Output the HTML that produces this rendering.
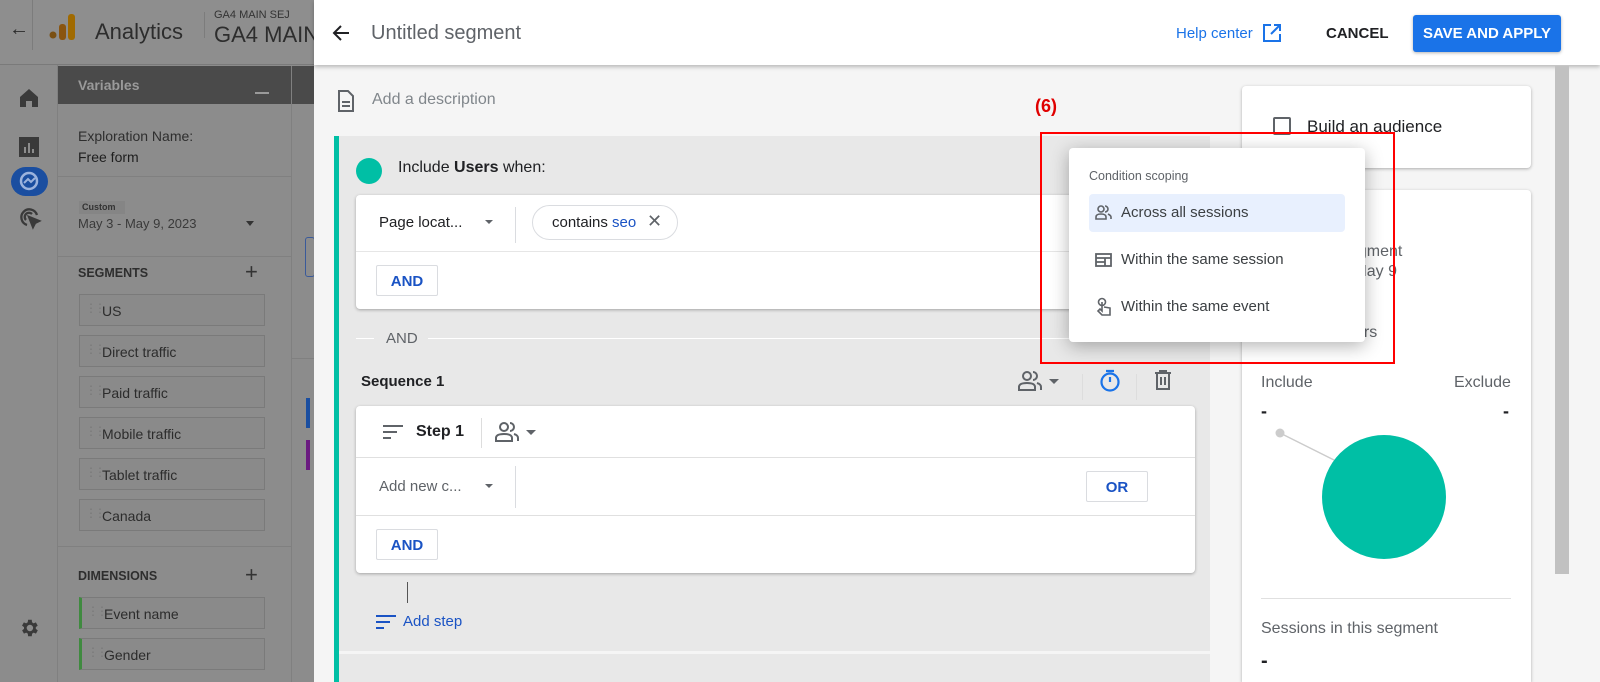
<!DOCTYPE html>
<html><head><meta charset="utf-8"><style>
*{box-sizing:border-box;margin:0;padding:0}
html,body{width:1600px;height:682px;overflow:hidden}
body{font-family:"Liberation Sans",Roboto,sans-serif;background:#8c8c8c;position:relative;color:#202124}
.a{position:absolute}
.dim{color:#2a2a2a}
.chip{position:absolute;left:79px;width:186px;height:32px;border:1px solid #7a7a7a;background:#8a8a8a;font-size:14px;color:#2c2c2c;padding:8px 0 0 22px}
.chip:before{content:"⋮⋮";position:absolute;left:5px;top:6px;font-size:12px;letter-spacing:-3px;color:#777}
.sec{font-size:12.5px;font-weight:bold;color:#2e2e2e}
.card{background:#fff;border-radius:4px;box-shadow:0 1px 3px rgba(0,0,0,.3)}
.btn{position:absolute;border:1px solid #dadce0;background:#fff;color:#1a53c4;font-size:15px;font-weight:bold;text-align:center;border-radius:2px}
.mi{position:absolute;left:20px;width:256px;height:38px;border-radius:4px;font-size:15px;color:#3c4043;padding:10px 0 0 32px}
</style></head><body>
<!-- dimmed app -->
<div class="a" style="left:0;top:0;width:1600px;height:65px;background:#8e8e8e;border-bottom:1px solid #7a7a7a"></div>
<div class="a" style="left:32px;top:0;width:1px;height:50px;background:#7c7c7c"></div>
<div class="a dim" style="left:9px;top:18px;font-size:20px">←</div>
<svg class="a" style="left:48px;top:14px" width="28" height="26"><circle cx="5" cy="21" r="3.5" fill="#7a4f12"/><rect x="11" y="10" width="7" height="16" rx="3" fill="#8a5510"/><rect x="20" y="0" width="7" height="26" rx="3" fill="#a06a00"/></svg>
<div class="a" style="left:95px;top:19px;font-size:22px;color:#2d2d2d">Analytics</div>
<div class="a" style="left:204px;top:12px;width:1px;height:26px;background:#7c7c7c"></div>
<div class="a" style="left:214px;top:9px;font-size:11px;color:#333">GA4 MAIN SEJ</div>
<div class="a" style="left:214px;top:22px;font-size:22px;color:#2d2d2d">GA4 MAIN</div>
<svg class="a" style="left:18px;top:88px" width="22" height="20" fill="#3a3a3a"><path d="M2 9 11 1 20 9V19H14V13H8V19H2Z"/></svg>
<svg class="a" style="left:19px;top:137px" width="20" height="20" fill="#3a3a3a"><path d="M0 0H20V20H0ZM5 10V16H7V10ZM9 6V16H11V6ZM13 12V16H15V12Z"/></svg>
<div class="a" style="left:11px;top:167px;width:37px;height:29px;border-radius:15px;background:#1a4ea0"></div>
<svg class="a" style="left:19px;top:171px" width="21" height="21"><circle cx="10" cy="10" r="8" fill="none" stroke="#9bb3dd" stroke-width="2.5"/><path d="M5 12 9 8 12 11 16 7" stroke="#9bb3dd" stroke-width="2" fill="none"/></svg>
<svg class="a" style="left:18px;top:206px" width="24" height="24" fill="none" stroke="#3a3a3a" stroke-width="2.3"><path d="M19 9A8 8 0 1 0 9 19"/><path d="M14 8A4 4 0 1 0 8 14"/><path d="M11 11 21 15 17 17 15 21Z" fill="#3a3a3a"/></svg>
<svg class="a" style="left:18px;top:617px" width="22" height="22" viewBox="0 0 24 24" fill="#3a3a3a"><path d="M19.4 13a7.5 7.5 0 0 0 0-2l2.1-1.6-2-3.5-2.5 1a7 7 0 0 0-1.7-1L15 3h-4l-.4 2.9a7 7 0 0 0-1.7 1l-2.5-1-2 3.5L6.6 11a7.5 7.5 0 0 0 0 2l-2.1 1.6 2 3.5 2.5-1a7 7 0 0 0 1.7 1L11 21h4l.4-2.9a7 7 0 0 0 1.7-1l2.5 1 2-3.5ZM13 15.5A3.5 3.5 0 1 1 13 8.5a3.5 3.5 0 0 1 0 7Z"/></svg>
<div class="a" style="left:57px;top:65px;width:1px;height:617px;background:#808080"></div>
<div class="a" style="left:58px;top:66px;width:233px;height:38px;background:#4a4a4a"></div>
<div class="a" style="left:78px;top:77px;font-size:14px;font-weight:bold;color:#9a9a9a">Variables</div>
<div class="a" style="left:255px;top:92px;width:14px;height:2px;background:#9a9a9a"></div>
<div class="a" style="left:291px;top:66px;width:1px;height:616px;background:#808080"></div>
<div class="a" style="left:292px;top:66px;width:30px;height:38px;background:#4a4a4a"></div>
<div class="a" style="left:78px;top:126px;font-size:14px;color:#2e2e2e;line-height:21px">Exploration Name:<br><span style="color:#1e1e1e">Free form</span></div>
<div class="a" style="left:58px;top:176px;width:233px;height:1px;background:#808080"></div>
<div class="a" style="left:79px;top:201px;width:46px;height:13px;background:#858585"></div>
<div class="a" style="left:82px;top:202px;font-size:9px;font-weight:bold;color:#333">Custom</div>
<div class="a" style="left:78px;top:216px;font-size:13px;color:#3a3a3a">May 3 - May 9, 2023</div>
<div class="a" style="left:246px;top:221px;border:4px solid transparent;border-top:5px solid #333"></div>
<div class="a" style="left:58px;top:256px;width:233px;height:1px;background:#808080"></div>
<div class="a sec" style="left:78px;top:266px">SEGMENTS</div>
<div class="a" style="left:245px;top:262px;font-size:22px;color:#333;line-height:20px">+</div>
<div class="chip" style="top:294px">US</div>
<div class="chip" style="top:335px">Direct traffic</div>
<div class="chip" style="top:376px">Paid traffic</div>
<div class="chip" style="top:417px">Mobile traffic</div>
<div class="chip" style="top:458px">Tablet traffic</div>
<div class="chip" style="top:499px">Canada</div>
<div class="a" style="left:58px;top:546px;width:233px;height:1px;background:#808080"></div>
<div class="a sec" style="left:78px;top:569px">DIMENSIONS</div>
<div class="a" style="left:245px;top:565px;font-size:22px;color:#333;line-height:20px">+</div>
<div class="chip" style="top:597px;border-left:3px solid #3f8a3f">Event name</div>
<div class="chip" style="top:638px;border-left:3px solid #3f8a3f">Gender</div>
<div class="a" style="left:292px;top:358px;width:30px;height:1px;background:#808080"></div>
<div class="a" style="left:306px;top:398px;width:4px;height:30px;background:#1a4ea0"></div>
<div class="a" style="left:306px;top:440px;width:4px;height:30px;background:#6a1a80"></div>
<div class="a" style="left:305px;top:237px;width:10px;height:40px;border:1px solid #3a5a9a;border-radius:3px"></div>

<!-- dialog -->
<div class="a" style="left:314px;top:0;width:1286px;height:682px;background:#f5f5f5"></div>
<div class="a" style="left:314px;top:0;width:1286px;height:65px;background:#fff;box-shadow:0 2px 4px rgba(0,0,0,.25)"></div>
<svg class="a" style="left:331px;top:23px" width="20" height="20" fill="none" stroke="#202124" stroke-width="2"><path d="M18 10H3M10 3 3 10 10 17"/></svg>
<div class="a" style="left:371px;top:22px;font-size:20px;color:#5f6368">Untitled segment</div>
<div class="a" style="left:1176px;top:25px;font-size:15px;color:#1a73e8">Help center</div>
<svg class="a" style="left:1262px;top:23px" width="20" height="20" fill="none" stroke="#1a73e8" stroke-width="2"><path d="M9 2H2V18H18V11"/><path d="M12 2H18V8M18 2 9 11"/></svg>
<div class="a" style="left:1326px;top:25px;font-size:15px;font-weight:bold;color:#202124">CANCEL</div>
<div class="a" style="left:1413px;top:15px;width:148px;height:37px;background:#1a73e8;border-radius:3px;box-shadow:0 1px 3px rgba(0,0,0,.3);color:#fff;font-size:15px;font-weight:bold;padding-top:10px;text-align:center">SAVE AND APPLY</div>
<svg class="a" style="left:337px;top:90px" width="18" height="22" fill="none" stroke="#5f6368" stroke-width="2"><path d="M2 1H11L16 6V21H2Z"/><path d="M5 12H13M5 16H13"/></svg>
<div class="a" style="left:372px;top:91px;font-size:16px;color:#80868b">Add a description</div>

<div class="a" style="left:334px;top:136px;width:876px;height:546px;background:#e8e8e8;border-left:5px solid #00bfa5"></div>
<div class="a" style="left:339px;top:651px;width:871px;height:3px;background:#f5f5f5"></div>
<div class="a" style="left:356px;top:158px;width:26px;height:26px;border-radius:50%;background:#00bfa5"></div>
<div class="a" style="left:398px;top:159px;font-size:16px">Include <b>Users</b> when:</div>
<div class="a card" style="left:356px;top:195px;width:860px;height:114px"></div>
<div class="a" style="left:356px;top:251px;width:860px;height:1px;background:#e6e6e6"></div>
<div class="a" style="left:379px;top:214px;font-size:15px">Page locat...</div>
<div class="a" style="left:485px;top:220px;border:4px solid transparent;border-top:4px solid #5f6368"></div>
<div class="a" style="left:515px;top:207px;width:1px;height:36px;background:#dadce0"></div>
<div class="a" style="left:532px;top:205px;width:146px;height:35px;border:1px solid #dadce0;border-radius:18px;font-size:15px;padding:8px 0 0 19px">contains <span style="color:#1a53c4">seo</span><span style="position:absolute;left:114px;top:5px;font-size:18px;color:#5f6368">✕</span></div>
<div class="btn" style="left:376px;top:265px;width:62px;height:31px;padding-top:7px">AND</div>
<div class="a" style="left:356px;top:338px;width:18px;height:1px;background:#fff"></div>
<div class="a" style="left:386px;top:330px;font-size:15px;color:#5f6368">AND</div>
<div class="a" style="left:428px;top:338px;width:782px;height:1px;background:#fff"></div>
<div class="a" style="left:361px;top:373px;font-size:15px;font-weight:bold">Sequence 1</div>
<svg class="a" style="left:1018px;top:371px" width="26" height="20" fill="none" stroke="#5f6368" stroke-width="2"><circle cx="9" cy="5" r="4"/><path d="M1 19V16C1 13 5 12 9 12S17 13 17 16V19Z"/><path d="M15 1A4 4 0 0 1 15 9M19 12C22 13 23 14 23 16V19"/></svg>
<div class="a" style="left:1049px;top:379px;border:5px solid transparent;border-top:5px solid #5f6368"></div>
<div class="a" style="left:1082px;top:374px;width:1px;height:26px;background:#ddd"></div>
<svg class="a" style="left:1099px;top:369px" width="22" height="24" fill="none" stroke="#1a73e8" stroke-width="2.2"><circle cx="11" cy="13" r="8.5"/><path d="M7 2H15M11 8V13"/></svg>
<div class="a" style="left:1136px;top:374px;width:1px;height:26px;background:#ddd"></div>
<svg class="a" style="left:1154px;top:370px" width="18" height="20" fill="none" stroke="#5f6368" stroke-width="2"><path d="M1 3H17M6 3V1H12V3M3 3V19H15V3M7 7V15M11 7V15"/></svg>
<div class="a card" style="left:356px;top:406px;width:839px;height:167px"></div>
<div class="a" style="left:356px;top:457px;width:839px;height:1px;background:#e0e0e0"></div>
<div class="a" style="left:356px;top:515px;width:839px;height:1px;background:#e0e0e0"></div>
<svg class="a" style="left:383px;top:425px" width="22" height="14" fill="#5f6368"><rect y="0" width="20" height="2"/><rect y="6" width="14" height="2"/><rect y="12" width="8" height="2"/></svg>
<div class="a" style="left:416px;top:423px;font-size:16px;font-weight:bold">Step 1</div>
<div class="a" style="left:481px;top:418px;width:1px;height:30px;background:#ddd"></div>
<svg class="a" style="left:495px;top:422px" width="26" height="20" fill="none" stroke="#5f6368" stroke-width="2"><circle cx="9" cy="5" r="4"/><path d="M1 19V16C1 13 5 12 9 12S17 13 17 16V19Z"/><path d="M15 1A4 4 0 0 1 15 9M19 12C22 13 23 14 23 16V19"/></svg>
<div class="a" style="left:526px;top:430px;border:5px solid transparent;border-top:5px solid #5f6368"></div>
<div class="a" style="left:379px;top:478px;font-size:15px;color:#5f6368">Add new c...</div>
<div class="a" style="left:485px;top:484px;border:4px solid transparent;border-top:4px solid #5f6368"></div>
<div class="a" style="left:515px;top:466px;width:1px;height:42px;background:#dadce0"></div>
<div class="btn" style="left:1086px;top:471px;width:62px;height:31px;padding-top:7px">OR</div>
<div class="btn" style="left:376px;top:529px;width:62px;height:31px;padding-top:7px">AND</div>
<div class="a" style="left:407px;top:582px;width:1px;height:21px;background:#555"></div>
<svg class="a" style="left:376px;top:615px" width="22" height="14" fill="#1a53c4"><rect y="0" width="20" height="2"/><rect y="6" width="14" height="2"/><rect y="12" width="8" height="2"/></svg>
<div class="a" style="left:403px;top:613px;font-size:15px;color:#1a53c4">Add step</div>

<!-- right panel -->
<div class="a card" style="left:1242px;top:86px;width:289px;height:82px"></div>
<div class="a" style="left:1273px;top:117px;width:18px;height:18px;border:2px solid #5f6368;border-radius:2px"></div>
<div class="a" style="left:1307px;top:117px;font-size:17px">Build an audience</div>
<div class="a card" style="left:1242px;top:190px;width:289px;height:492px;border-radius:4px 4px 0 0"></div>
<div class="a" style="left:1349px;top:242px;font-size:16px;color:#5f6368;line-height:20px">egment<br>&nbsp;May 9</div>
<div class="a" style="left:1355px;top:324px;font-size:16px;color:#5f6368">ers</div>
<div class="a" style="left:1261px;top:374px;font-size:16px;color:#5f6368">Include</div>
<div class="a" style="left:1454px;top:374px;font-size:16px;color:#5f6368">Exclude</div>
<div class="a" style="left:1261px;top:401px;font-size:18px;font-weight:bold">-</div>
<div class="a" style="left:1503px;top:401px;font-size:18px;font-weight:bold">-</div>
<svg class="a" style="left:1270px;top:425px" width="180" height="140"><line x1="10" y1="8" x2="70" y2="38" stroke="#ccc" stroke-width="1.5"/><circle cx="10" cy="8" r="4.5" fill="#ccc"/><circle cx="114" cy="72" r="62" fill="#00bfa5"/></svg>
<div class="a" style="left:1261px;top:598px;width:250px;height:1px;background:#e0e0e0"></div>
<div class="a" style="left:1261px;top:620px;font-size:16px;color:#5f6368">Sessions in this segment</div>
<div class="a" style="left:1261px;top:650px;font-size:20px;font-weight:bold">-</div>
<div class="a" style="left:1555px;top:66px;width:14px;height:508px;background:#c1c1c1"></div>

<!-- menu -->
<div class="a" style="left:1069px;top:148px;width:296px;height:194px;background:#fff;border-radius:4px;box-shadow:0 4px 18px rgba(0,0,0,.3)">
<div class="a" style="left:20px;top:21px;font-size:12.5px;color:#5f6368">Condition scoping</div>
<div class="mi" style="top:46px;background:#e8f0fe">Across all sessions</div>
<div class="mi" style="top:93px">Within the same session</div>
<div class="mi" style="top:140px">Within the same event</div>
<svg class="a" style="left:26px;top:57px" width="18" height="15" fill="none" stroke="#5f6368" stroke-width="1.6"><circle cx="6" cy="4" r="3"/><path d="M1 14V12C1 10 3 9 6 9S11 10 11 12V14Z"/><path d="M10 1A3 3 0 0 1 10 7M13 9C15 10 16 11 16 12V14"/></svg>
<svg class="a" style="left:26px;top:105px" width="17" height="14" fill="none" stroke="#5f6368" stroke-width="1.8"><rect x="1" y="1" width="15" height="12"/><path d="M1 5H16M10 5V13M1 9H10"/></svg>
<svg class="a" style="left:27px;top:149px" width="16" height="19" fill="none" stroke="#5f6368" stroke-width="1.6"><circle cx="6" cy="5" r="3.5"/><path d="M6 5V14L4 12 2 14 6 18H14V11L8 10"/></svg>
</div>

<div class="a" style="left:1035px;top:96px;font-size:18px;font-weight:bold;color:#e00000">(6)</div>
<div class="a" style="left:1040px;top:132px;width:355px;height:232px;border:2px solid #f00"></div>
</body></html>
